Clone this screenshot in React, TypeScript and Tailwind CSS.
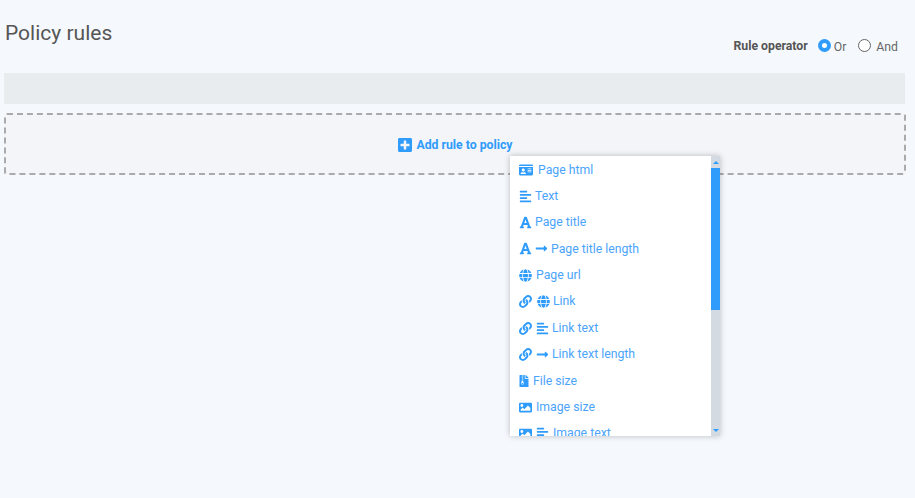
import React from "react";
import { FaIdCard, FaAlignLeft, FaFont, FaLongArrowAltRight, FaGlobe, FaLink, FaFileArchive, FaImage, FaPlusSquare } from "react-icons/fa";

type Item = { icons: React.ReactNode[]; label: string; iconGap: string; gap: string };

const cls = "text-[#2f9bfb] shrink-0";
const A = <FaFont key="a" size={13} className={cls} />;
const Arrow = <FaLongArrowAltRight key="arrow" size={13} className={cls} />;
const Align = <FaAlignLeft key="al" size={13} className={cls} />;
const Globe = <FaGlobe key="g" size={13} className={cls} />;
const Chain = <FaLink key="l" size={13} className={cls} />;
const Img = <FaImage key="i" size={13} className={cls} />;

const items: Item[] = [
  { icons: [<FaIdCard key="c" size={14} className={cls} />], label: "Page html", iconGap: "gap-0", gap: "ml-[5px]" },
  { icons: [Align], label: "Text", iconGap: "gap-0", gap: "ml-[3px]" },
  { icons: [A], label: "Page title", iconGap: "gap-0", gap: "ml-[3px]" },
  { icons: [A, Arrow], label: "Page title length", iconGap: "gap-[2.5px]", gap: "ml-[3.5px]" },
  { icons: [Globe], label: "Page url", iconGap: "gap-0", gap: "ml-[4px]" },
  { icons: [Chain, Globe], label: "Link", iconGap: "gap-[4.5px]", gap: "ml-[3.5px]" },
  { icons: [Chain, Align], label: "Link text", iconGap: "gap-[4px]", gap: "ml-[3px]" },
  { icons: [Chain, Arrow], label: "Link text length", iconGap: "gap-[3.5px]", gap: "ml-[3.5px]" },
  { icons: [<FaFileArchive key="f" size={12} className={cls + " -ml-[1px]"} />], label: "File size", iconGap: "gap-0", gap: "ml-[3px]" },
  { icons: [Img], label: "Image size", iconGap: "gap-0", gap: "ml-[4px]" },
  { icons: [Img, Align], label: "Image text", iconGap: "gap-[4px]", gap: "ml-[4px]" },
];

export default function App() {
  return (
    <div className="relative h-[498px] w-[915px] overflow-hidden bg-[#f5f9fd] font-['Roboto',sans-serif] text-[#555]">
      <div className="flex h-[73px] items-start justify-between pl-[5px] pr-[17px]">
        <h1 className="mt-[19px] text-[21px] leading-[28px] font-normal text-[#555]">Policy rules</h1>
        <div className="mt-[36px] flex items-center text-[12.25px] leading-[18px]">
          <span className="font-bold text-[#555]">Rule operator</span>
          <span className="ml-[10px] box-border h-[13px] w-[13px] -translate-y-[1px] rounded-full border-[4px] border-[#2f9bfb] bg-white" />
          <span className="ml-[3px] mt-[2px] text-[#666]">Or</span>
          <span className="ml-[12px] box-border h-[13px] w-[13px] -translate-y-[1px] rounded-full border border-[#666] bg-white" />
          <span className="ml-[5px] mt-[2px] text-[#666]">And</span>
        </div>
      </div>
      <div className="mx-[4px] h-[31px] w-[901px] bg-[#e9ecef]" />
      <div className="mx-[4px] mt-[9px] flex h-[62px] w-[902px] items-center justify-center rounded-[3px] border-2 border-dashed border-[#aaaaaa] bg-[#f4f5f8]">
        <div className="mt-[2px] flex items-center text-[12.25px] font-bold text-[#2f9bfb]">
          <FaPlusSquare size={16} className="text-[#2f9bfb]" />
          <span className="ml-[3px]">Add rule to policy</span>
        </div>
      </div>
      <div className="absolute left-[510px] top-[156px] flex h-[280px] w-[210px] overflow-hidden bg-white shadow-[0_0_6px_rgba(0,0,0,0.25)]">
        <div className="h-full flex-1 overflow-hidden pl-[9px] pt-[0.5px]">
          <ul>
            {items.map((it) => (
              <li key={it.label} className="flex h-[26.4px] items-center text-[12.25px] text-[#4ba4fb]">
                <span className={"flex items-center " + it.iconGap}>{it.icons}</span>
                <span className={it.gap}>{it.label}</span>
              </li>
            ))}
          </ul>
        </div>
        <div className="flex h-full w-[9px] flex-col bg-[#d3dae1]">
          <div className="flex h-[12px] items-center justify-center">
            <span className="h-0 w-0 border-x-[3px] border-b-[3px] border-x-transparent border-b-[#2f9bfb]" />
          </div>
          <div className="h-[142px] bg-[#2f9bfb]" />
          <div className="flex-1" />
          <div className="flex h-[12px] items-center justify-center">
            <span className="h-0 w-0 border-x-[3px] border-t-[3px] border-x-transparent border-t-[#2f9bfb]" />
          </div>
        </div>
      </div>
    </div>
  );
}
